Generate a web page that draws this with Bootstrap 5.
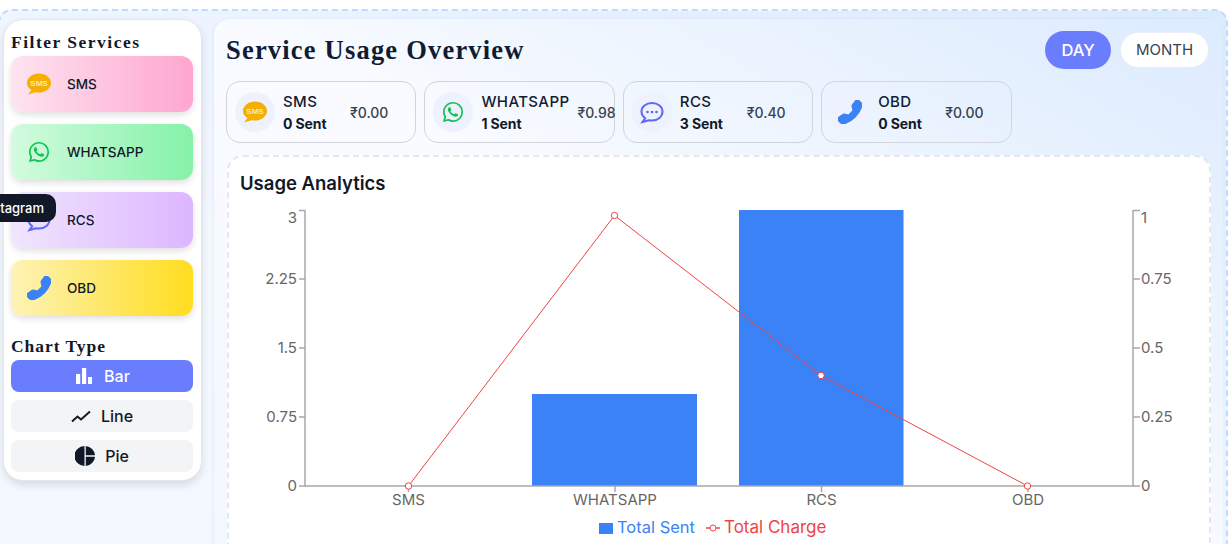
<!DOCTYPE html>
<html lang="en">
<head>
<meta charset="utf-8">
<title>Service Usage Overview</title>
<link href="https://cdn.jsdelivr.net/npm/bootstrap@5.3.0/dist/css/bootstrap.min.css" rel="stylesheet">
<style>
html,body{height:100%;overflow:hidden;background:#fff}
body{font-family:"Inter","Liberation Sans",sans-serif;color:#111827;padding-top:9px}
.shell{border:2px dashed #bfdbfe;border-radius:14px;margin:0 1px 0 -2px;padding:8px 3px 0 3px;height:600px;gap:12px;background:linear-gradient(to bottom left,#dbeafe,#f4f8ff 60%,#f4f8ff)}
.side{width:199px;height:462px;flex:none;background:#fff;border:1px solid #e5e7eb;border-radius:20px;padding:13px 8px 13px 7px;box-shadow:0 4px 8px rgba(0,0,0,.12)}
.serif{font-family:"Liberation Serif",serif;font-weight:700;color:#111827}
.side-h{font-size:17.5px;line-height:19px;letter-spacing:1.5px;margin:0 0 4px 0}
.side-h.second{margin-top:21px;letter-spacing:.95px}
.svc-list{gap:12px}
.svc{height:56px;border-radius:12px;padding:0 16px;gap:16px;font-size:13.5px;font-weight:500;box-shadow:0 3px 6px rgba(0,0,0,.12);position:relative}
.svc svg{flex:none}
.g-sms{background:linear-gradient(to right,#fde4ef,#ffa6d0)}
.g-wa{background:linear-gradient(to right,#d3fbdf,#84f2a8)}
.g-rcs{background:linear-gradient(to right,#f0e5fe,#dcb6ff)}
.g-obd{background:linear-gradient(to right,#fdf3b6,#ffdd1f)}
.tip{position:absolute;right:calc(100% - 45px);top:2px;height:28px;padding:0 12px;border-radius:10px;background:#111827;color:#fff;font-size:13px;font-weight:500;line-height:28px;z-index:5}
.ctype{height:32px;border:0;border-radius:8px;background:#f3f4f6;color:#111827;font-size:16px;font-weight:500;padding:0;gap:10px}
.ctype.on,.ctype.on:hover{background:#6a7dfd;color:#fff}
.main{flex:1 1 auto;min-width:0;border-radius:16px;padding:12px 14px 12px 12px;background:linear-gradient(to bottom left,#dcebfe,#f9fbff 50%,#f3f7fe);box-shadow:-1px 0 3px rgba(100,130,200,.1)}
.title{font-size:26.5px;line-height:38px;letter-spacing:1.2px;color:#0f1c33;margin:0}
.pill-row{gap:9px}
.pill{border-radius:20px;font-size:15px;padding:0;font-weight:400;color:#374151;background:#fff;border:1px solid #e8edf5;height:36px;width:89px}
.pill.on,.pill.on:hover{background:#6a7dfd;color:#fff;border:0;height:38px;width:66px;font-weight:500;font-size:16.5px}
.stat{width:190.4px;height:62px;flex:none;border:1px solid #d1d5db;border-radius:14px;padding:0 8px;gap:8px}
.stat-ico{width:40px;height:40px;flex:none;border-radius:50%;background:#eef2fe}
.stat-txt{min-width:59px;flex:none;white-space:nowrap;margin-top:2px}
.stat-name{font-size:15px;font-weight:500;line-height:22px;color:#111c33;letter-spacing:.4px}
.stat-sent{font-size:14px;font-weight:700;line-height:22px;color:#111827;letter-spacing:-.1px}
.stat-amt{font-size:14px;font-weight:500;color:#374151;white-space:nowrap}
.panel{margin:12px -2px 0 1px;height:420px;background:#fff;border:2px dashed #e5e7eb;border-radius:16px;padding:14px 11px 0}
.panel-h{font-size:18.5px;font-weight:600;line-height:24px;margin:0;color:#111827}
.chart{display:block;margin-top:5px;width:955px;height:344px}
.chart text{font-family:"Inter","Liberation Sans",sans-serif;font-size:15px;fill:#666}
.chart text.cat{font-size:15px}
.chart text.leg{font-size:16.5px}
.chart text.leg2{font-size:17px}
</style>
</head>
<body>
<div class="shell d-flex align-items-start">
  <aside class="side">
    <h2 class="serif side-h">Filter Services</h2>
    <div class="d-flex flex-column svc-list">
      <div class="svc g-sms d-flex align-items-center">
        <svg width="24" height="24" viewBox="0 0 24 24"><path fill="#f4b000" d="M12 1.500C5.400 1.500 0 5.700 0 11c0 3 1.700 5.500 4.500 7.100L1 22.500l7.500-2.300c1.100.3 2.300.4 3.500.4 6.600 0 12-4.300 12-9.600S18.600 1.500 12 1.500z"/><text x="12" y="14" text-anchor="middle" font-family="Liberation Sans,sans-serif" font-size="8" font-weight="700" fill="#fde9b0">SMS</text></svg>
        <span>SMS</span>
      </div>
      <div class="svc g-wa d-flex align-items-center">
        <svg width="24" height="24" viewBox="-1.500 -1.500 19 19"><path fill="#0ec44f" d="M13.601 2.326A7.854 7.854 0 0 0 7.994 0C3.627 0 .068 3.558.064 7.926c0 1.399.366 2.760 1.057 3.965L0 16l4.204-1.102a7.933 7.933 0 0 0 3.790.965h.004c4.368 0 7.926-3.558 7.930-7.930A7.898 7.898 0 0 0 13.600 2.326zM7.994 14.521a6.573 6.573 0 0 1-3.356-.920l-.240-.144-2.494.654.666-2.433-.156-.251a6.560 6.560 0 0 1-1.007-3.505c0-3.626 2.957-6.584 6.591-6.584a6.560 6.560 0 0 1 4.660 1.931 6.557 6.557 0 0 1 1.928 4.660c-.004 3.639-2.961 6.592-6.592 6.592zm3.615-4.934c-.197-.099-1.170-.578-1.353-.646-.182-.065-.315-.099-.445.099-.133.197-.513.646-.627.775-.114.133-.232.148-.430.050-.197-.100-.836-.308-1.592-.985-.590-.525-.985-1.175-1.103-1.372-.114-.198-.011-.304.088-.403.087-.088.197-.232.296-.346.100-.114.133-.198.198-.330.065-.134.034-.248-.015-.347-.050-.099-.445-1.076-.612-1.470-.160-.389-.323-.335-.445-.340-.114-.007-.247-.007-.380-.007a.729.729 0 0 0-.529.247c-.182.198-.691.677-.691 1.654 0 .977.710 1.916.810 2.049.098.133 1.394 2.132 3.383 2.992.470.205.840.326 1.129.418.475.152.904.129 1.246.080.380-.058 1.171-.480 1.338-.943.164-.464.164-.860.114-.943-.049-.084-.182-.133-.380-.232z"/></svg>
        <span>WHATSAPP</span>
      </div>
      <div class="svc g-rcs d-flex align-items-center">
        <div class="tip">Instagram</div>
        <svg width="24" height="24" viewBox="0 0 24 24"><path fill="none" stroke="#5f67f5" stroke-width="2" d="M12 3c-6 0-10.500 3.800-10.500 8.600 0 2.700 1.400 5 3.700 6.600L2.500 22l6.500-1.800c1 .2 2 .3 3 .3 6 0 10.500-4 10.500-8.900S18 3 12 3z"/><g fill="#5f67f5"><circle cx="7.500" cy="12" r="1.300"/><circle cx="12" cy="12" r="1.300"/><circle cx="16.500" cy="12" r="1.300"/></g></svg>
        <span>RCS</span>
      </div>
      <div class="svc g-obd d-flex align-items-center">
        <svg width="24" height="24" viewBox="0 0 16 16"><g transform="matrix(-1 0 0 1 16 0)"><path fill="#3b82f6" stroke="#3b82f6" stroke-width=".7" d="M1.885.511a1.745 1.745 0 0 1 2.610.163L6.290 2.980c.329.423.445.974.315 1.494l-.547 2.190a.678.678 0 0 0 .178.643l2.457 2.457a.678.678 0 0 0 .644.178l2.189-.547a1.745 1.745 0 0 1 1.494.315l2.306 1.794c.829.645.905 1.870.163 2.611l-1.034 1.034c-.740.740-1.846 1.065-2.877.702a18.634 18.634 0 0 1-7.010-4.420 18.634 18.634 0 0 1-4.420-7.009c-.362-1.030-.037-2.137.703-2.877L1.885.511z"/></g></svg>
        <span>OBD</span>
      </div>
    </div>
    <h2 class="serif side-h second">Chart Type</h2>
    <div class="d-flex flex-column gap-2">
      <button class="btn ctype on d-flex align-items-center justify-content-center">
        <svg width="20" height="20" viewBox="0 0 20 20"><path fill="#fff" d="M2 8h4.200v10H2zM8 2h4.200v16H8zM14 11h4v7h-4z"/></svg>Bar
      </button>
      <button class="btn ctype d-flex align-items-center justify-content-center">
        <svg width="20" height="20" viewBox="0 0 20 20"><path fill="none" stroke="#111827" stroke-width="2" d="M1 15.500l5.500-5 3.500 3L19 5.500"/></svg>Line
      </button>
      <button class="btn ctype d-flex align-items-center justify-content-center">
        <svg width="20" height="20" viewBox="0 0 20 20"><path fill="#111827" d="M9.500 0v20a10 10 0 0 1 0-20zM10.800 0A10 10 0 0 1 20 9.300h-9.200zM10.800 10.700H20A10 10 0 0 1 10.800 20z"/></svg>Pie
      </button>
    </div>
  </aside>
  <main class="main">
    <div class="d-flex justify-content-between align-items-center">
      <h1 class="serif title">Service Usage Overview</h1>
      <div class="d-flex align-items-center pill-row">
        <button class="btn pill on">DAY</button>
        <button class="btn pill">MONTH</button>
      </div>
    </div>
    <div class="d-flex gap-2 mt-2 pt-1 stats">
      <div class="stat d-flex align-items-center">
        <div class="stat-ico d-flex align-items-center justify-content-center"><svg width="24" height="24" viewBox="0 0 24 24"><path fill="#f4b000" d="M12 1.500C5.400 1.500 0 5.700 0 11c0 3 1.700 5.500 4.500 7.100L1 22.500l7.500-2.300c1.100.3 2.300.4 3.500.4 6.600 0 12-4.300 12-9.600S18.600 1.500 12 1.500z"/><text x="12" y="14" text-anchor="middle" font-family="Liberation Sans,sans-serif" font-size="8" font-weight="700" fill="#fde9b0">SMS</text></svg></div>
        <div class="stat-txt"><div class="stat-name">SMS</div><div class="stat-sent">0 Sent</div></div>
        <div class="stat-amt">₹0.00</div>
      </div>
      <div class="stat d-flex align-items-center">
        <div class="stat-ico d-flex align-items-center justify-content-center"><svg width="24" height="24" viewBox="-1.500 -1.500 19 19"><path fill="#0ec44f" d="M13.601 2.326A7.854 7.854 0 0 0 7.994 0C3.627 0 .068 3.558.064 7.926c0 1.399.366 2.760 1.057 3.965L0 16l4.204-1.102a7.933 7.933 0 0 0 3.790.965h.004c4.368 0 7.926-3.558 7.930-7.930A7.898 7.898 0 0 0 13.600 2.326zM7.994 14.521a6.573 6.573 0 0 1-3.356-.920l-.240-.144-2.494.654.666-2.433-.156-.251a6.560 6.560 0 0 1-1.007-3.505c0-3.626 2.957-6.584 6.591-6.584a6.560 6.560 0 0 1 4.660 1.931 6.557 6.557 0 0 1 1.928 4.660c-.004 3.639-2.961 6.592-6.592 6.592zm3.615-4.934c-.197-.099-1.170-.578-1.353-.646-.182-.065-.315-.099-.445.099-.133.197-.513.646-.627.775-.114.133-.232.148-.430.050-.197-.100-.836-.308-1.592-.985-.590-.525-.985-1.175-1.103-1.372-.114-.198-.011-.304.088-.403.087-.088.197-.232.296-.346.100-.114.133-.198.198-.330.065-.134.034-.248-.015-.347-.050-.099-.445-1.076-.612-1.470-.160-.389-.323-.335-.445-.340-.114-.007-.247-.007-.380-.007a.729.729 0 0 0-.529.247c-.182.198-.691.677-.691 1.654 0 .977.710 1.916.810 2.049.098.133 1.394 2.132 3.383 2.992.470.205.840.326 1.129.418.475.152.904.129 1.246.080.380-.058 1.171-.480 1.338-.943.164-.464.164-.860.114-.943-.049-.084-.182-.133-.380-.232z"/></svg></div>
        <div class="stat-txt"><div class="stat-name">WHATSAPP</div><div class="stat-sent">1 Sent</div></div>
        <div class="stat-amt">₹0.98</div>
      </div>
      <div class="stat d-flex align-items-center">
        <div class="stat-ico d-flex align-items-center justify-content-center"><svg width="24" height="24" viewBox="0 0 24 24"><path fill="none" stroke="#5f67f5" stroke-width="2" d="M12 3c-6 0-10.500 3.800-10.500 8.600 0 2.700 1.400 5 3.700 6.600L2.500 22l6.500-1.800c1 .2 2 .3 3 .3 6 0 10.500-4 10.500-8.900S18 3 12 3z"/><g fill="#5f67f5"><circle cx="7.500" cy="12" r="1.300"/><circle cx="12" cy="12" r="1.300"/><circle cx="16.500" cy="12" r="1.300"/></g></svg></div>
        <div class="stat-txt"><div class="stat-name">RCS</div><div class="stat-sent">3 Sent</div></div>
        <div class="stat-amt">₹0.40</div>
      </div>
      <div class="stat d-flex align-items-center">
        <div class="stat-ico d-flex align-items-center justify-content-center"><svg width="24" height="24" viewBox="0 0 16 16"><g transform="matrix(-1 0 0 1 16 0)"><path fill="#3b82f6" stroke="#3b82f6" stroke-width=".7" d="M1.885.511a1.745 1.745 0 0 1 2.610.163L6.290 2.980c.329.423.445.974.315 1.494l-.547 2.190a.678.678 0 0 0 .178.643l2.457 2.457a.678.678 0 0 0 .644.178l2.189-.547a1.745 1.745 0 0 1 1.494.315l2.306 1.794c.829.645.905 1.870.163 2.611l-1.034 1.034c-.740.740-1.846 1.065-2.877.702a18.634 18.634 0 0 1-7.010-4.420 18.634 18.634 0 0 1-4.420-7.009c-.362-1.030-.037-2.137.703-2.877L1.885.511z"/></g></svg></div>
        <div class="stat-txt"><div class="stat-name">OBD</div><div class="stat-sent">0 Sent</div></div>
        <div class="stat-amt">₹0.00</div>
      </div>
    </div>
    <section class="panel">
      <h3 class="panel-h">Usage Analytics</h3>
      <svg class="chart" viewBox="240 200 955 344">
        <rect x="532" y="394" width="165" height="92" fill="#3b82f6"/>
        <rect x="739" y="210" width="164.500" height="276" fill="#3b82f6"/>
        <g stroke="#a8a8a8" fill="none" stroke-width="1.500">
          <path d="M305 210V486M1133 210V486M305 486H1133"/>
          <path d="M299 210.500H305M299 279H305M299 348H305M299 417H305M299 486H305"/>
          <path d="M1133 210.500H1140M1133 279H1140M1133 348H1140M1133 417H1140M1133 486H1140"/>
          <path d="M408.500 486V492M615 486V492M821.500 486V492M1028 486V492"/>
        </g>
        <polyline fill="none" stroke="#ef4444" stroke-width="1" points="408.500,486 614.500,215.500 821,375.500 1027.500,486"/>
        <g fill="#fff" stroke="#ef4444" stroke-width="1">
          <circle cx="408.500" cy="486" r="3.200"/><circle cx="614.500" cy="215.500" r="3.200"/><circle cx="821" cy="375.500" r="3.200"/><circle cx="1027.500" cy="486" r="3.200"/>
        </g>
        <g text-anchor="end">
          <text x="297" y="223">3</text><text x="297" y="284">2.25</text><text x="297" y="353">1.5</text><text x="297" y="422">0.75</text><text x="297" y="491">0</text>
        </g>
        <g>
          <text x="1141" y="223">1</text><text x="1141" y="284">0.75</text><text x="1141" y="353">0.5</text><text x="1141" y="422">0.25</text><text x="1141" y="491">0</text>
        </g>
        <g text-anchor="middle">
          <text class="cat" x="408.500" y="505">SMS</text><text class="cat" x="615" y="505">WHATSAPP</text><text class="cat" x="821.500" y="505">RCS</text><text class="cat" x="1028" y="505">OBD</text>
        </g>
        <rect x="599" y="523" width="14" height="11" fill="#3b82f6"/>
        <text class="leg" x="617" y="533" style="fill:#3b82f6">Total Sent</text>
        <path d="M706 528H720" stroke="#ef4444" stroke-width="1.500"/>
        <circle cx="713" cy="528" r="3" fill="#fff" stroke="#ef4444"/>
        <text class="leg leg2" x="724" y="533" style="fill:#ef4444">Total Charge</text>
      </svg>
    </section>
  </main>
</div>
<script src="https://cdn.jsdelivr.net/npm/bootstrap@5.3.0/dist/js/bootstrap.bundle.min.js"></script>
</body>
</html>
